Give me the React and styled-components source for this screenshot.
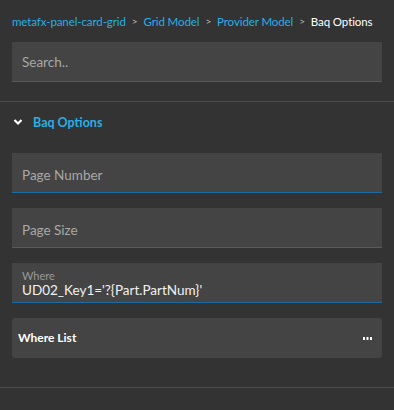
import React from "react";
import styled, { createGlobalStyle } from "styled-components";

const GlobalStyle = createGlobalStyle`
  html, body {
    margin: 0;
    padding: 0;
    background: #333333;
  }
  body {
    font-family: Lato, "Open Sans", sans-serif;
  }
`;

const Panel = styled.div`
  width: 394px;
  height: 410px;
  background: #333333;
  display: flex;
  flex-direction: column;
  overflow: hidden;
`;

const Breadcrumb = styled.div`
  display: flex;
  align-items: center;
  gap: 6px;
  padding: 13px 12px 0;
  height: 16px;
  font-size: 11.5px;
  letter-spacing: -0.1px;
  white-space: nowrap;
`;

const Crumb = styled.span`
  color: ${(p) => (p.$current ? "#ffffff" : "#27b0e6")};
`;

const Sep = styled.span`
  color: #bbbbbb;
  font-size: 10px;
`;

const Top = styled.div`
  padding: 13px 12px 19px;
  border-bottom: 1px solid #4d4d4d;
`;

const Field = styled.div`
  height: 39px;
  background: #444444;
  border-bottom: 1px solid #1a6ca3;
  display: flex;
  flex-direction: column;
  justify-content: center;
  padding: 0 10px;
`;

const Placeholder = styled.span`
  color: #a8a8a8;
  font-size: 13.5px;
  margin-top: ${(p) => (p.$low ? "4px" : "0")};
`;

const FieldLabel = styled.span`
  color: #9a9a9a;
  font-size: 11px;
  line-height: 13px;
  margin-top: 3px;
`;

const FieldValue = styled.span`
  color: #f2f2f2;
  font-size: 13.5px;
  line-height: 17px;
`;

const Section = styled.div`
  padding: 0 12px 29px;
  border-bottom: 1px solid #4d4d4d;
`;

const SectionHeader = styled.div`
  display: flex;
  align-items: center;
  gap: 10px;
  height: 40px;
  padding-left: 1px;
  margin-bottom: 11px;
`;

const SectionTitle = styled.span`
  color: #27b0e6;
  font-size: 12.5px;
  font-weight: 700;
`;

const Fields = styled.div`
  display: flex;
  flex-direction: column;
  gap: 15px;
`;

const ListButton = styled.div`
  height: 40px;
  background: #444444;
  border-radius: 3px;
  display: flex;
  align-items: center;
  justify-content: space-between;
  padding: 0 10px 0 6px;
`;

const ListLabel = styled.span`
  color: #ffffff;
  font-size: 12px;
  font-weight: 700;
  margin-top: -1px;
`;

const Chevron = () => (
  <svg width="10" height="8" viewBox="0 0 10 8">
    <path d="M1.5 2 L5 5.5 L8.5 2" fill="none" stroke="#ffffff" strokeWidth="2.2" />
  </svg>
);

const Dots = () => (
  <svg width="9" height="3" viewBox="0 0 9 3">
    <rect x="0" y="0" width="2" height="3" fill="#ffffff" />
    <rect x="3.5" y="0" width="2" height="3" fill="#ffffff" />
    <rect x="7" y="0" width="2" height="3" fill="#ffffff" />
  </svg>
);

export default function App() {
  return (
    <Panel>
      <GlobalStyle />
      <Breadcrumb>
        <Crumb>metafx-panel-card-grid</Crumb>
        <Sep>&gt;</Sep>
        <Crumb>Grid Model</Crumb>
        <Sep>&gt;</Sep>
        <Crumb>Provider Model</Crumb>
        <Sep>&gt;</Sep>
        <Crumb $current>Baq Options</Crumb>
      </Breadcrumb>
      <Top>
        <Field>
          <Placeholder>Search..</Placeholder>
        </Field>
      </Top>
      <Section>
        <SectionHeader>
          <Chevron />
          <SectionTitle>Baq Options</SectionTitle>
        </SectionHeader>
        <Fields>
          <Field>
            <Placeholder $low>Page Number</Placeholder>
          </Field>
          <Field>
            <Placeholder $low>Page Size</Placeholder>
          </Field>
          <Field>
            <FieldLabel>Where</FieldLabel>
            <FieldValue>UD02_Key1='?{"{"}Part.PartNum{"}"}'</FieldValue>
          </Field>
          <ListButton>
            <ListLabel>Where List</ListLabel>
            <Dots />
          </ListButton>
        </Fields>
      </Section>
    </Panel>
  );
}
